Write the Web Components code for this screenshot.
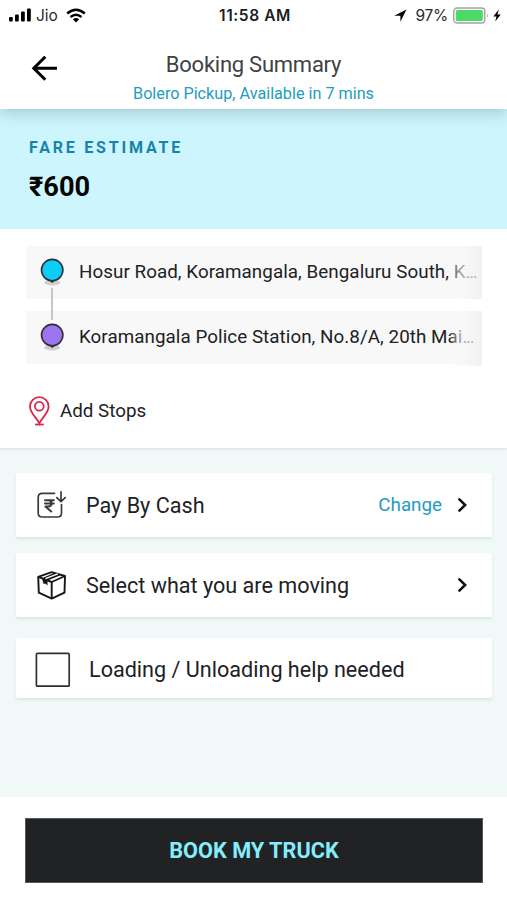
<!DOCTYPE html>
<html lang="en">
<head>
<meta charset="utf-8">
<title>Booking Summary</title>
<style>
    body {
        margin: 0;
        background: #fff;
        font-family: Roboto, "Noto Sans", sans-serif;
        color: #202124;
    }
    .more { letter-spacing: -1.3px; }
</style>
</head>
<body>
<booking-screen>
    <status-bar slot="top" carrier="Jio" time="11:58 AM" battery="97%"></status-bar>
    <page-header slot="top">
        Booking Summary
        <span slot="subtitle">Bolero Pickup, Available in 7 mins</span>
    </page-header>
    <fare-estimate label="FARE ESTIMATE">₹600</fare-estimate>
    <trip-route>
        <route-stop color="#0ccdf5">Hosur Road, Koramangala, Bengaluru South, K<span class="more">...</span></route-stop>
        <route-stop color="#9b74f0">Koramangala Police Station, No.8/A, 20th Mai<span class="more">...</span></route-stop>
        <add-stops slot="action">Add Stops</add-stops>
    </trip-route>
    <option-list>
        <option-card icon="cash" arrow>Pay By Cash<span slot="action">Change</span></option-card>
        <option-card icon="box" arrow>Select what you are moving</option-card>
        <option-card icon="check" class="check">Loading / Unloading help needed</option-card>
    </option-list>
    <book-button slot="bottom">BOOK MY TRUCK</book-button>
</booking-screen>

<script>
(function () {
    const icons = {
        cash: `<svg width="31" height="30" viewBox="0 0 31 30" fill="none" stroke="#3a3a3c" stroke-width="1.7" stroke-linecap="round" stroke-linejoin="round">
            <path d="M18.5 3.3H6.2Q2.2 3.3 2.2 7.3V23Q2.2 27 6.2 27H21.5Q25.5 27 25.5 23V14.5"/>
            <path d="M25 1.8V11.3M20.8 7.6L25 11.6L29.2 7.6"/>
            <path d="M9 10.2H17.8M9 13.5H17.8M9.4 10.2H12Q15.5 10.2 15.5 13.4Q15.5 16.4 12 16.4H9.4L15.2 21.5" stroke-width="2"/>
        </svg>`,
        box: `<svg width="31" height="30" viewBox="0 0 31 30" fill="none" stroke="#161616" stroke-width="1.9" stroke-linejoin="round">
            <path d="M2.2 6.8L15.6 2.2L29 6L28.5 22.6L15.7 28.6L2.8 22.6Z"/>
            <path d="M2.2 6.8L15.7 12L29 6M15.7 12L15.7 28.6"/>
            <path d="M6 8.2L18.5 2.8L25.2 4.9L11.5 10.6V15.6L9.3 13.6L7.6 14Z" fill="#161616" stroke="none"/>
            <path d="M9.5 8.6L21.8 3.9" stroke="#fff" stroke-width="1.5"/>
        </svg>`,
        check: `<svg width="36" height="36" viewBox="0 0 36 36" fill="none" stroke="#303133" stroke-width="1.7">
            <rect x="1.4" y="1.4" width="32.8" height="32.8" rx="1"/>
        </svg>`
    };

    class BaseElement extends HTMLElement {
        constructor() {
            super();
            this.attachShadow({mode: "open"});
        }

        connectedCallback() {
            this.shadowRoot.innerHTML = this.render();
        }
    }

    class BookingScreen extends BaseElement {
        render() {
            return `
            <style>
            :host {
                display: flex;
                flex-direction: column;
                height: 900px;
                background: #f0f9f8;
                overflow: hidden;
            }
            .top {
                position: relative;
                z-index: 1;
                box-sizing: border-box;
                height: 109px;
                background: #fff;
                box-shadow: 0 4px 14px rgba(60, 90, 95, .28);
            }
            .content { flex: 1; }
            </style>
            <div class="top"><slot name="top"></slot></div>
            <div class="content"><slot></slot></div>
            <slot name="bottom"></slot>`;
        }
    }

    class StatusBar extends BaseElement {
        render() {
            return `
            <style>
            :host {
                display: grid;
                grid-template-columns: 1fr auto 1fr;
                align-items: center;
                height: 30px;
                padding: 0 5px 0 8px;
                font: 400 15.5px/28px Inter, sans-serif;
                color: #2c2c2e;
            }
            div { display: flex; align-items: center; }
            svg { display: block; }
            span { padding-top: 2px; }
            .carrier { margin: 0 8px 0 4px; }
            .time { font-weight: 600; font-size: 15.5px; letter-spacing: .6px; color: #1c1c1e; }
            .right { justify-content: flex-end; }
            .battery { margin: 0 5px 0 9px; letter-spacing: -.3px; }
            .level { margin-right: 3px; }
            </style>
            <div>
                <svg width="24" height="14" viewBox="0 0 24 14">
                    <rect x="1" y="9" width="3.8" height="4.5" rx="1"/>
                    <rect x="7" y="6.5" width="3.8" height="7" rx="1"/>
                    <rect x="13" y="3.5" width="3.8" height="10" rx="1"/>
                    <rect x="19" y=".5" width="3.8" height="13" rx="1"/>
                </svg>
                <span class="carrier">${this.getAttribute("carrier")}</span>
                <svg width="20" height="15" viewBox="0 0 20 15" fill="none" stroke="#000" stroke-width="2.4">
                    <path d="M1.2 5.5Q10-2.2 18.8 5.5"/>
                    <path d="M4.5 9Q10 4.4 15.5 9"/>
                    <path d="M6.9 11.2Q10 8.8 13.1 11.2L10 14.5Z" fill="#000" stroke="none"/>
                </svg>
            </div>
            <span class="time">${this.getAttribute("time")}</span>
            <div class="right">
                <svg width="13" height="13" viewBox="0 0 13 13"><path d="M12.5.5L.3 6.8H6.4V12.8Z"/></svg>
                <span class="battery">${this.getAttribute("battery")}</span>
                <svg class="level" width="36" height="17" viewBox="0 0 36 17">
                    <rect x=".8" y="1" width="31" height="15" rx="3.2" fill="none" stroke="#a3a3a5" stroke-width="1.4"/>
                    <rect x="2.8" y="3" width="27" height="11" rx="1.5" fill="#4cd964"/>
                    <path d="M34 6.2Q35.6 8.5 34 10.8Z" fill="#a3a3a5"/>
                </svg>
                <svg width="10" height="13" viewBox="0 0 10 13"><path d="M6.8.5L1.3 7.4H4.5L3.2 12.5L8.8 5.5H5.5Z"/></svg>
            </div>`;
        }
    }

    class PageHeader extends BaseElement {
        render() {
            return `
            <style>
            :host {
                display: grid;
                grid-template-columns: 80px 1fr 80px;
                height: 79px;
            }
            .back { padding: 25px 0 0 31px; }
            svg { display: block; }
            .titles {
                display: flex;
                flex-direction: column;
                align-items: center;
                padding-top: 21px;
                white-space: nowrap;
            }
            .title { font-size: 22px; line-height: 28px; letter-spacing: -.25px; color: #414244; }
            .subtitle { margin-top: 5px; font-size: 16.2px; line-height: 20px; color: #1d9cc0; }
            </style>
            <div class="back">
                <svg width="27" height="27" viewBox="0 0 27 27" fill="none" stroke="#000" stroke-width="3">
                    <path d="M26 13.3H3M14.3 1.8L2.8 13.3L14.3 24.8"/>
                </svg>
            </div>
            <div class="titles">
                <div class="title"><slot></slot></div>
                <div class="subtitle"><slot name="subtitle"></slot></div>
            </div>`;
        }
    }

    class FareEstimate extends BaseElement {
        render() {
            return `
            <style>
            :host {
                display: block;
                box-sizing: border-box;
                height: 120px;
                padding: 29px 29px 0;
                background: #cdf5fe;
            }
            .label { font-size: 16px; line-height: 20px; font-weight: 700; letter-spacing: 2.8px; color: #1783a8; }
            .price { margin-top: 13px; font-size: 27.2px; line-height: 32px; font-weight: 700; color: #050505; }
            </style>
            <div class="label">${this.getAttribute("label")}</div>
            <div class="price"><slot></slot></div>`;
        }
    }

    class TripRoute extends BaseElement {
        render() {
            return `
            <style>
            :host {
                display: block;
                position: relative;
                box-sizing: border-box;
                height: 219px;
                padding: 17px 25px 0 26px;
                background: #fff;
                box-shadow: 0 1px 3px rgba(80, 110, 115, .2);
            }
            .stops { display: grid; grid-template-columns: minmax(0, 1fr); gap: 12px; }
            /* connector between the two pins */
            .line {
                position: absolute;
                left: 51px;
                top: 59px;
                width: 2px;
                height: 32px;
                background: #c6c6c7;
            }
            .action { padding: 31px 0 0 3px; }
            </style>
            <div class="stops"><slot></slot></div>
            <div class="line"></div>
            <div class="action"><slot name="action"></slot></div>`;
        }
    }

    class RouteStop extends BaseElement {
        render() {
            return `
            <style>
            :host {
                display: flex;
                position: relative;
                box-sizing: border-box;
                height: 53px;
                padding: 0 2px 0 14px;
                background: #f8f8f8;
                font-size: 18.8px;
                line-height: 52px;
                letter-spacing: .06px;
            }
            svg { flex: none; margin-top: 11px; }
            .address {
                flex: 1;
                min-width: 0;
                margin-left: 15px;
                white-space: nowrap;
            }
            /* fades out the end of a long address */
            .fade {
                position: absolute;
                inset: 0 0 0 auto;
                width: 32px;
                background: linear-gradient(90deg, rgba(248, 248, 248, .1), rgba(249, 249, 249, .6) 30%, rgba(240, 240, 240, .8));
            }
            :host(:nth-of-type(2)) .fade { bottom: -2px; }
            </style>
            <svg width="24" height="30" viewBox="0 0 24 30">
                <ellipse cx="12.2" cy="25.5" rx="8" ry="3" fill="#cfcfcf"/>
                <path d="M8 22H16.4L12.2 26Z" fill="#222"/>
                <circle cx="12.2" cy="13.1" r="10.7" fill="${this.getAttribute("color")}" stroke="#303038" stroke-width="1.6"/>
            </svg>
            <div class="address"><slot></slot></div>
            <div class="fade"></div>`;
        }
    }

    class AddStops extends BaseElement {
        render() {
            return `
            <style>
            :host { display: flex; align-items: center; height: 30px; font-size: 18.8px; line-height: 28px; }
            svg { margin-right: 10px; margin-top: 2px; }
            span { padding-top: 1px; }
            </style>
            <svg width="21" height="30" viewBox="0 0 21 30" fill="none" stroke="#d8294c" stroke-width="1.8">
                <path d="M10.3 27.5C8.5 22.3 1 17.5 1 10.5A9.3 9.3 0 0 1 19.6 10.5C19.6 17.5 12.1 22.3 10.3 27.5Z"/>
                <circle cx="10.3" cy="10.3" r="4.4"/>
                <path d="M6 28.5H14.8"/>
            </svg>
            <span><slot></slot></span>`;
        }
    }

    class OptionList extends BaseElement {
        render() {
            return `
            <style>
            :host { display: grid; gap: 16px; padding: 25px 15px 0 16px; }
            ::slotted(.check) { margin-top: 5px; }
            </style>
            <slot></slot>`;
        }
    }

    class OptionCard extends BaseElement {
        render() {
            const arrow = this.hasAttribute("arrow")
                ? `<svg class="arrow" width="11" height="16" viewBox="0 0 11 16" fill="none" stroke="#111" stroke-width="2.5"><path d="M1.6 1.6L8.2 8L1.6 14.4"/></svg>`
                : "";
            return `
            <style>
            :host {
                display: flex;
                align-items: center;
                box-sizing: border-box;
                height: 64px;
                padding: 0 24px 0 20px;
                background: #fff;
                border-radius: 2px;
                box-shadow: 0 2px 3px rgba(70, 100, 105, .13);
                font-size: 21.6px;
            }
            :host(.check) { height: 60px; padding-left: 19px; padding-top: 4px; }
            svg { display: block; flex: none; }
            .label { flex: 1; margin-left: 19px; white-space: nowrap; }
            :host(.check) .label { margin: -1px 0 0 18px; }
            .action { margin-right: 15px; font-size: 18.8px; color: #209cc2; }
            </style>
            ${icons[this.getAttribute("icon")]}
            <span class="label"><slot></slot></span>
            <span class="action"><slot name="action"></slot></span>
            ${arrow}`;
        }
    }

    class BookButton extends BaseElement {
        render() {
            return `
            <style>
            :host { display: block; box-sizing: border-box; height: 103px; padding: 21px 24px 0 25px; background: #fff; }
            button {
                display: block;
                width: 100%;
                height: 65px;
                padding: 0;
                border: 1px solid #55585a;
                background: #202224;
                font: 700 21.7px/63px Roboto, sans-serif;
                color: #85ecfb;
            }
            </style>
            <button><slot></slot></button>`;
        }
    }

    customElements.define("booking-screen", BookingScreen);
    customElements.define("status-bar", StatusBar);
    customElements.define("page-header", PageHeader);
    customElements.define("fare-estimate", FareEstimate);
    customElements.define("trip-route", TripRoute);
    customElements.define("route-stop", RouteStop);
    customElements.define("add-stops", AddStops);
    customElements.define("option-list", OptionList);
    customElements.define("option-card", OptionCard);
    customElements.define("book-button", BookButton);
})();
</script>
</body>
</html>
